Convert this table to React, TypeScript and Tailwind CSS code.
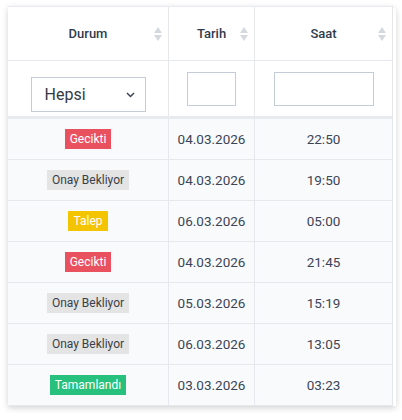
import React from "react";

type Row = { status: string; date: string; time: string };

const rows: Row[] = [
  { status: "Gecikti", date: "04.03.2026", time: "22:50" },
  { status: "Onay Bekliyor", date: "04.03.2026", time: "19:50" },
  { status: "Talep", date: "06.03.2026", time: "05:00" },
  { status: "Gecikti", date: "04.03.2026", time: "21:45" },
  { status: "Onay Bekliyor", date: "05.03.2026", time: "15:19" },
  { status: "Onay Bekliyor", date: "06.03.2026", time: "13:05" },
  { status: "Tamamlandı", date: "03.03.2026", time: "03:23" },
];

function Badge({ status }: { status: string }) {
  const cls =
    status === "Gecikti"
      ? "bg-[#e9515f] text-white"
      : status === "Talep"
      ? "bg-[#f5c400] text-white"
      : status === "Tamamlandı"
      ? "bg-[#27c07d] text-white"
      : "bg-[#e4e4e4] text-[#3a3f47]";
  return (
    <span className={`inline-flex h-[20px] items-center px-[5px] text-[12px] leading-none ${cls}`}>
      {status}
    </span>
  );
}

function SortIcon() {
  return (
    <svg width="8" height="14" viewBox="0 0 8 14" className="shrink-0">
      <path d="M4 0 L8 6 L0 6 Z" fill="#d5d9df" />
      <path d="M0 8 L8 8 L4 14 Z" fill="#d5d9df" />
    </svg>
  );
}

function HeaderCell({ label, className }: { label: string; className: string }) {
  return (
    <div className={`relative flex items-center justify-center ${className}`}>
      <span className="text-[13px] font-medium text-[#2f3b4c]">{label}</span>
      <div className="absolute right-[6px] top-1/2 -translate-y-1/2">
        <SortIcon />
      </div>
    </div>
  );
}

export default function App() {
  return (
    <div
      className="h-[420px] w-[402px] bg-white pl-[8px] pt-[6px]"
      style={{ fontFamily: 'Roboto, "Noto Sans", sans-serif' }}
    >
      <div className="w-[388px] rounded-tr-[6px] bg-white pr-[3px] shadow-[0_2px_6px_rgba(0,0,0,0.18)]">
        <div className="border-r border-[#e3e7ec]">
          {/* header row */}
          <div className="grid h-[55px] grid-cols-[161px_86px_137px] border-t border-[#e8ebef] border-b border-b-[#e5e9ee]">
            <HeaderCell label="Durum" className="border-r border-[#e5e9ee]" />
            <HeaderCell label="Tarih" className="border-r border-[#e5e9ee]" />
            <HeaderCell label="Saat" className="" />
          </div>
          {/* filter row */}
          <div className="grid h-[55px] grid-cols-[161px_86px_137px]">
            <div className="flex items-end justify-center border-r border-[#e5e9ee] pb-[4px]">
              <div className="flex h-[35px] w-[115px] items-center justify-between border border-[#c4ccd8] bg-white pl-[13px] pr-[10px]">
                <span className="text-[16px] text-[#333a44]">Hepsi</span>
                <svg width="9" height="6" viewBox="0 0 9 6">
                  <path d="M1 1 L4.5 4.5 L8 1" fill="none" stroke="#3a4150" strokeWidth="1.5" />
                </svg>
              </div>
            </div>
            <div className="flex items-center justify-center border-r border-[#e5e9ee]">
              <div className="h-[34px] w-[49px] border border-[#c4ccd8] bg-white" />
            </div>
            <div className="flex items-center justify-center">
              <div className="h-[34px] w-[100px] border border-[#c4ccd8] bg-white" />
            </div>
          </div>
          <div className="h-[3px] bg-[#e7ebf0]" />
          {/* body rows */}
          {rows.map((r, i) => (
            <div
              key={i}
              className="grid h-[41px] grid-cols-[161px_86px_137px] border-b border-[#e5e9ee] bg-[#f9fafc]"
            >
              <div className="flex items-center justify-center border-r border-[#e5e9ee]">
                <Badge status={r.status} />
              </div>
              <div className="flex items-center justify-center border-r border-[#e5e9ee] text-[13.5px] text-[#3b4556]">
                {r.date}
              </div>
              <div className="flex items-center justify-center text-[13.5px] text-[#3b4556]">{r.time}</div>
            </div>
          ))}
        </div>
      </div>
    </div>
  );
}
